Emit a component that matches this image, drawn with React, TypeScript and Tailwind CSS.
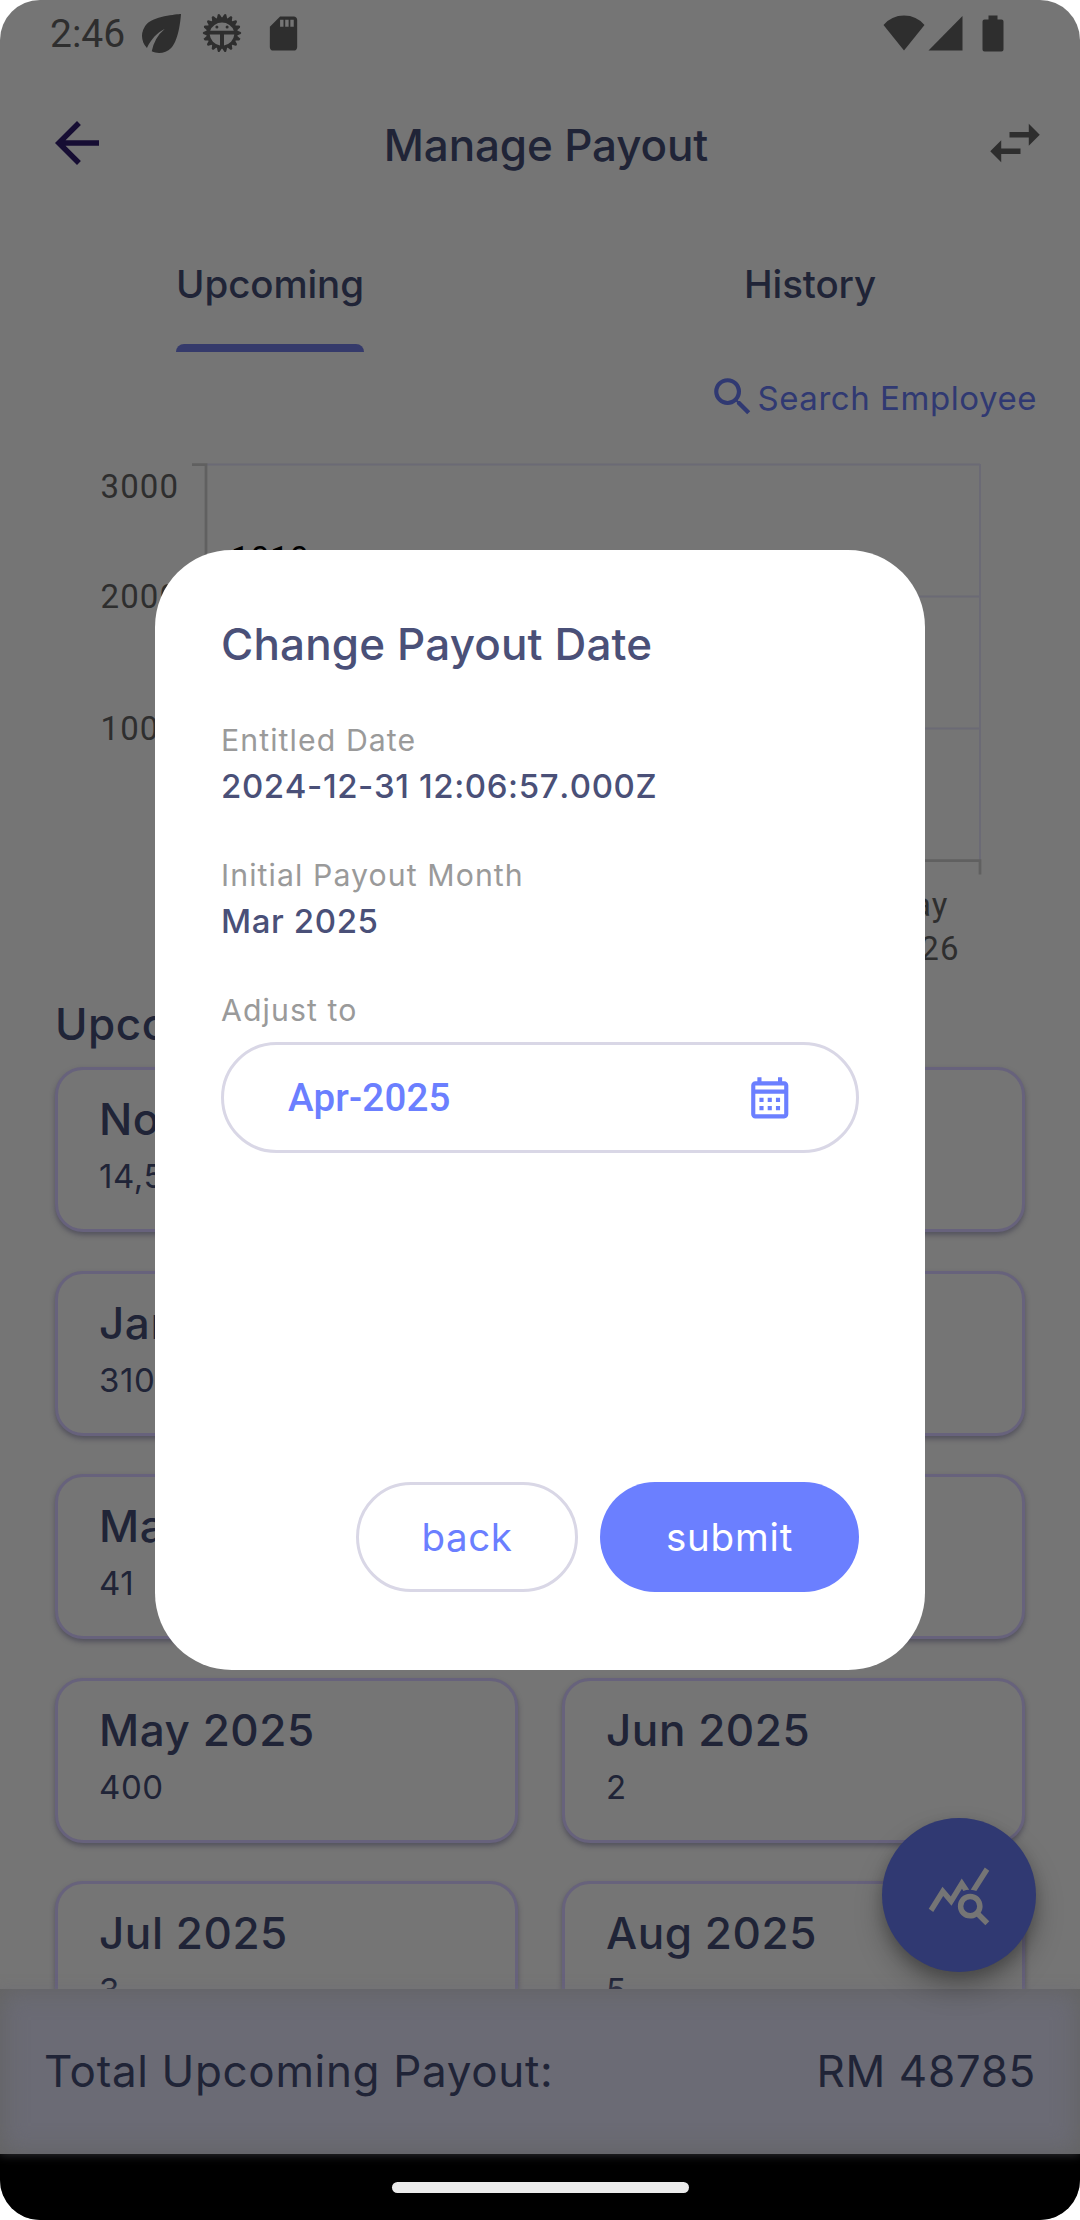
import React from "react";
import {
  MdArrowBack,
  MdSwapHoriz,
  MdSearch,
  MdOutlineCalendarMonth,
  MdQueryStats,
  MdSdCard,
} from "react-icons/md";

const payouts = [
  { month: "Nov 2024", amount: "14,500" },
  { month: "Dec 2024", amount: "2,410" },
  { month: "Jan 2025", amount: "3100" },
  { month: "Feb 2025", amount: "120" },
  { month: "Mar 2025", amount: "41" },
  { month: "Apr 2025", amount: "36" },
  { month: "May 2025", amount: "400" },
  { month: "Jun 2025", amount: "2" },
  { month: "Jul 2025", amount: "3" },
  { month: "Aug 2025", amount: "5" },
];

function GearBug() {
  const teeth = Array.from({ length: 18 }, (_, i) => i * 20 + 10);
  return (
    <svg width="40" height="40" viewBox="0 0 40 40" fill="#2e2e2e">
      {teeth.map((a) => (
        <path key={a} d="M17 6 L18.9 1.4 Q20 0 21.1 1.4 L23 6Z" transform={`rotate(${a} 20 20)`} />
      ))}
      <path
        fillRule="evenodd"
        d="M20 4.500a15.500 15.500 0 1 0 0 31a15.500 15.500 0 0 0 0-31zM8.200 17.800a12.200 11 0 0 1 23.600 0zM7.700 21.600H18V32.400A12.400 12 0 0 1 7.700 21.600zM22 21.600H32.300A12.400 12 0 0 1 22 32.400z"
      />
      <circle cx="14.900" cy="14" r="1.500" />
      <circle cx="25.100" cy="14" r="1.500" />
    </svg>
  );
}

function StatusBar() {
  return (
    <div className="flex h-[66px] items-center pl-[50px] pr-[76px]">
      <span className="mt-[2px] w-[92px] font-[Roboto] text-[39px] leading-[66px] text-[#2e2e2e]">2:46</span>
      <svg width="39" height="39" viewBox="4 4 16 16" fill="#2e2e2e">
        <path d="M6.050 8.050a7.001 7.001 0 0 0-.020 9.880c1.470-3.400 4.090-6.240 7.360-7.930A15.952 15.952 0 0 0 8 19.320c2.600 1.230 5.800.780 7.950-1.370C19.430 14.470 20 4 20 4S9.530 4.570 6.050 8.050z" />
      </svg>
      <div className="ml-[21px]">
        <GearBug />
      </div>
      <MdSdCard className="ml-[21px] size-[41px] text-[#2e2e2e]" />
      <svg className="ml-auto" width="121" height="38" viewBox="0 0 121 38" fill="#2e2e2e">
        <path d="M0.500 11Q8.500 1.500 21 1.500T41.500 11L21 36.500z" />
        <path d="M45.500 36.500L79.500 2V36.500z" />
        <path d="M105.500 1.500h9v4h4a2 2 0 0 1 2 2v28a2 2 0 0 1-2 2h-17a2 2 0 0 1-2-2v-28a2 2 0 0 1 2-2h4z" />
      </svg>
    </div>
  );
}

function Chart() {
  return (
    <svg className="block h-[540px] w-[1080px] shrink-0" viewBox="0 442 1080 540">
      <g stroke="#6b6a75" strokeWidth="2" fill="none">
        <path d="M207 464.500H980M207 596.500H980M207 728.500H980" />
        <path d="M980 464V860" />
      </g>
      <g stroke="#606060" strokeWidth="2.750" fill="none">
        <path d="M192 464.500H206V860.500H980V874.500" />
      </g>
      <g fontFamily="Roboto, sans-serif" fontSize="33" fill="#2e2e2e" letterSpacing="1.1">
        <text x="100.500" y="498">3000</text>
        <text x="100.500" y="608">2000</text>
        <text x="100.500" y="740">1000</text>
        <text x="883" y="916">May</text>
        <text x="881" y="960">2026</text>
        <text x="231" y="570" fill="#000">1010</text>
      </g>
    </svg>
  );
}

function PayoutCard({ month, amount }: { month: string; amount: string }) {
  return (
    <div className="h-[165px] rounded-[28px] border-[3px] border-[#67627c] bg-[#757575] pl-[41px] pt-[23px] text-[#202437] shadow-[0_3px_5px_rgba(50,48,70,0.5)]">
      <div className="text-[44px] font-medium leading-[52px] tracking-[0.55px]">{month}</div>
      <div className="mt-[10px] text-[33px] leading-[42px] tracking-[0.6px]">{amount}</div>
    </div>
  );
}

function Field({ label, value }: { label: string; value: string }) {
  return (
    <div className="h-[135px]">
      <div className="text-[30.25px] leading-[40px] tracking-[1.08px] text-[#9a9a9a]">{label}</div>
      <div className="mt-[3px] text-[33px] font-medium leading-[46px] tracking-[0.6px] text-[#4a5078] [font-kerning:none]">{value}</div>
    </div>
  );
}

function Dialog() {
  return (
    <div className="absolute left-[155px] top-[550px] flex h-[1119.5px] w-[770px] flex-col rounded-[77px] bg-white px-[66px] pt-[66px]">
      <h2 className="h-[104px] text-[44px] font-medium leading-[56px] tracking-[0.14px] text-[#4a5078]">Change Payout Date</h2>
      <Field label="Entitled Date" value="2024-12-31 12:06:57.000Z" />
      <Field label="Initial Payout Month" value="Mar 2025" />
      <div className="text-[30.25px] leading-[40px] tracking-[1.08px] text-[#9a9a9a]">Adjust to</div>
      <div className="mt-[12px] flex h-[111px] shrink-0 items-center justify-between rounded-full border-[3px] border-[#d9d7e6] pl-[64px] pr-[62px]">
        <span className="font-[Roboto] text-[38.5px] font-medium leading-[50px] tracking-[0.2px] text-[#6b7fff]">Apr-2025</span>
        <MdOutlineCalendarMonth className="size-[49.5px] text-[#6b7fff]" />
      </div>
      <div className="mt-[329px] flex justify-end gap-[22px] text-[38.5px] leading-[50px]">
        <button className="flex h-[110px] w-[222px] items-center justify-center rounded-full border-[3px] border-[#d9d7e6] text-[#6b7fff] tracking-[0.6px]">back</button>
        <button className="flex h-[110px] w-[259px] items-center justify-center rounded-full bg-[#6b7fff] text-white tracking-[0.8px]">submit</button>
      </div>
    </div>
  );
}

export default function App() {
  return (
    <div className="h-[2220px] w-[1080px] overflow-hidden bg-white">
      <div className="relative flex h-[2220px] w-[1080px] flex-col overflow-hidden rounded-[40px] bg-[#757575] font-[Inter] text-[#202437]">
        <StatusBar />
        <header className="flex h-[154px] items-center justify-between pl-[44px] pr-[32px]">
          <MdArrowBack className="size-[66px] text-[#160d33]" />
          <h1 className="mt-[4px] text-[44px] font-medium leading-[56px] tracking-[-0.15px]">Manage Payout</h1>
          <MdSwapHoriz className="size-[66px] text-[#2e2e2e]" />
        </header>
        <nav className="flex h-[132px] shrink-0 text-[38.5px] font-medium leading-[48px] tracking-[-0.1px]">
          <div className="flex w-1/2 flex-col items-center justify-between pt-[40px]">
            <span>Upcoming</span>
            <div className="h-[8px] w-[188px] rounded-t-[8px] bg-[#353a6b]" />
          </div>
          <div className="flex w-1/2 flex-col items-center pt-[40px]">
            <span>History</span>
          </div>
        </nav>
        <div className="flex h-[90px] shrink-0 items-center justify-end pr-[43px] text-[#303972]">
          <MdSearch className="size-[49.5px]" />
          <span className="mt-[2px] text-[33px] leading-[44px] tracking-[0.55px]">Search Employee</span>
        </div>
        <div className="h-[1547px] shrink-0 overflow-hidden">
          <Chart />
          <div className="flex h-[85px] items-center pl-[55px] pb-[2px] text-[44px] font-medium leading-[56px] tracking-[0.55px]">Upcoming Payout</div>
          <div className="grid grid-cols-2 gap-x-[44px] gap-y-[38.5px] px-[55px]">
            {payouts.map((p) => (
              <PayoutCard key={p.month} {...p} />
            ))}
          </div>
        </div>
        <footer className="relative flex h-[165px] shrink-0 items-center justify-between bg-[#6b6b75] pb-[2px] pl-[44px] pr-[44px] text-[44px] leading-[56px] tracking-[0.65px] shadow-[inset_0_0_26px_rgba(98,98,94,0.9),0_0_10px_rgba(107,107,117,0.5)]">
          <span>Total Upcoming Payout:</span>
          <span>RM 48785</span>
        </footer>
        <div className="flex h-[66px] shrink-0 items-center justify-center bg-black">
          <div className="h-[11px] w-[297px] rounded-full bg-[#ebebeb]" />
        </div>
        <button className="absolute left-[882px] top-[1818px] flex size-[154px] items-center justify-center rounded-full bg-[#303972] text-[#757575] shadow-[0_16px_28px_rgba(0,0,0,0.25),0_6px_14px_rgba(0,0,0,0.2)]">
          <MdQueryStats className="size-[66px]" />
        </button>
        <Dialog />
      </div>
    </div>
  );
}
